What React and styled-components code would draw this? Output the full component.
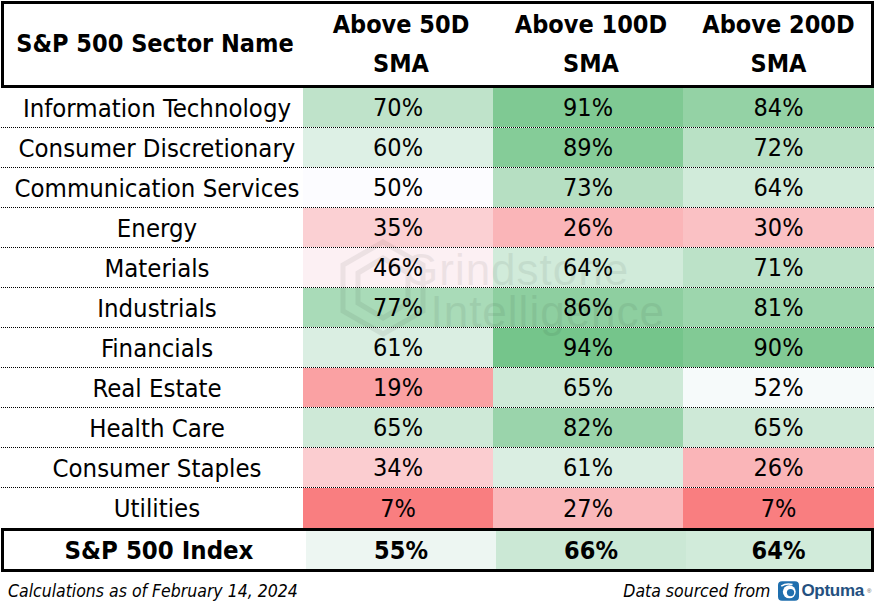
import React from "react";
import styled, { createGlobalStyle } from "styled-components";

const GlobalStyle = createGlobalStyle`
  html, body {
    margin: 0;
    padding: 0;
    background: #ffffff;
  }
  body {
    font-family: "DejaVu Sans Condensed", "DejaVu Sans", sans-serif;
    font-stretch: condensed;
    color: #000;
  }
`;

const sectors = [
  ["Information Technology", 70, 91, 84],
  ["Consumer Discretionary", 60, 89, 72],
  ["Communication Services", 50, 73, 64],
  ["Energy", 35, 26, 30],
  ["Materials", 46, 64, 71],
  ["Industrials", 77, 86, 81],
  ["Financials", 61, 94, 90],
  ["Real Estate", 19, 65, 52],
  ["Health Care", 65, 82, 65],
  ["Consumer Staples", 34, 61, 26],
  ["Utilities", 7, 27, 7],
];

const index = ["S&P 500 Index", 55, 66, 64];

// three colour scale: red at 0, white at 50, green at 100
const mix = (a, b, t) => a.map((v, i) => Math.round(v + (b[i] - v) * t));
const scale = (v) => {
  const red = [248, 105, 107];
  const white = [252, 252, 255];
  const green = [99, 190, 123];
  const c = v < 50 ? mix(red, white, v / 50) : mix(white, green, (v - 50) / 50);
  return `rgb(${c.join(",")})`;
};

const Page = styled.div`
  width: 875px;
  height: 603px;
  position: relative;
  overflow: hidden;
  padding: 1px 1px 0 1px;
  box-sizing: border-box;
`;

const Grid = styled.div`
  display: grid;
  grid-template-columns: 302px 190px 190px 1fr;
`;

const HeaderBox = styled(Grid)`
  height: 87px;
  border: 3px solid #000;
  box-sizing: border-box;
`;

const HeadCell = styled.div`
  display: flex;
  align-items: center;
  justify-content: center;
  text-align: center;
  font-weight: bold;
  font-size: 25px;
  line-height: 39px;
  padding-bottom: 2px;
  white-space: nowrap;
`;

const Row = styled(Grid)`
  height: 40px;
  box-sizing: border-box;
  border-bottom: ${(p) => (p.$last ? "none" : "1px dotted #000")};
`;

const IndexRow = styled(Grid)`
  height: 44px;
  border: 3px solid #000;
  box-sizing: border-box;
`;

const NameCell = styled.div`
  display: flex;
  align-items: center;
  justify-content: center;
  white-space: nowrap;
  font-size: 25.5px;
  font-weight: ${(p) => (p.$bold ? "bold" : "normal")};
  padding-left: ${(p) => (p.$bold ? "8px" : "10px")};
`;

const ValueCell = styled.div`
  display: flex;
  align-items: center;
  justify-content: center;
  font-size: 25px;
  font-weight: ${(p) => (p.$bold ? "bold" : "normal")};
  background: ${(p) => p.$bg};
`;

const Footer = styled.div`
  display: flex;
  justify-content: space-between;
  align-items: center;
  padding: 8px 3px 0 7px;
  font-style: italic;
  font-size: 17.5px;
`;

const Source = styled.div`
  display: flex;
  align-items: center;
  gap: 8px;
`;

const Logo = styled.div`
  display: flex;
  align-items: center;
  gap: 2px;
  font-family: "Liberation Sans", Arial, sans-serif;
  font-stretch: normal;
  font-style: normal;
  font-size: 17px;
  font-weight: bold;
  color: #24507f;
  letter-spacing: -0.3px;
`;

const Reg = styled.sup`
  font-size: 6px;
  font-weight: normal;
  margin-left: 1px;
  color: #555;
`;

const Watermark = styled.div`
  position: absolute;
  left: 338px;
  top: 238px;
  display: flex;
  align-items: center;
  gap: 4px;
  opacity: 0.06;
  pointer-events: none;
  color: #000;
`;

const MarkText = styled.div`
  font-family: "Liberation Sans", sans-serif;
  font-stretch: normal;
  font-size: 44px;
  line-height: 42px;
  letter-spacing: 1px;
  margin-left: -28px;
  padding-top: 6px;
`;

const OptumaIcon = () => (
  <svg width="21" height="22" viewBox="0 0 26 24">
    <rect x="0" y="0" width="26" height="24" rx="5" fill="#1f6fae" />
    <circle cx="14" cy="13" r="8" fill="#fff" />
    <circle cx="15.5" cy="14" r="4.5" fill="#1f6fae" />
    <path d="M4 6 Q10 2 18 4" stroke="#fff" strokeWidth="2" fill="none" />
  </svg>
);

const Hexagon = () => (
  <svg width="90" height="100" viewBox="0 0 90 100">
    <path d="M45 4 L85 27 L85 73 L45 96 L5 73 L5 27 Z" fill="none" stroke="#000" strokeWidth="5" />
    <path d="M45 20 L70 35 L70 65 L45 80 L20 65 L20 35 Z" fill="none" stroke="#000" strokeWidth="5" />
  </svg>
);

export default function App() {
  return (
    <Page>
      <GlobalStyle />
      <HeaderBox>
        <HeadCell>S&amp;P 500 Sector Name</HeadCell>
        <HeadCell>Above 50D<br />SMA</HeadCell>
        <HeadCell>Above 100D<br />SMA</HeadCell>
        <HeadCell>Above 200D<br />SMA</HeadCell>
      </HeaderBox>
      {sectors.map(([name, a, b, c], i) => (
        <Row key={name} $last={i === sectors.length - 1}>
          <NameCell>{name}</NameCell>
          <ValueCell $bg={scale(a)}>{a}%</ValueCell>
          <ValueCell $bg={scale(b)}>{b}%</ValueCell>
          <ValueCell $bg={scale(c)}>{c}%</ValueCell>
        </Row>
      ))}
      <IndexRow>
        <NameCell $bold>{index[0]}</NameCell>
        <ValueCell $bold $bg={scale(index[1])}>{index[1]}%</ValueCell>
        <ValueCell $bold $bg={scale(index[2])}>{index[2]}%</ValueCell>
        <ValueCell $bold $bg={scale(index[3])}>{index[3]}%</ValueCell>
      </IndexRow>
      <Footer>
        <span>Calculations as of February 14, 2024</span>
        <Source>
          <span>Data sourced from</span>
          <Logo>
            <OptumaIcon />
            <span>Optuma</span>
            <Reg>®</Reg>
          </Logo>
        </Source>
      </Footer>
      <Watermark>
        <Hexagon />
        <MarkText>Grindstone<br />&nbsp;&nbsp;Intelligence</MarkText>
      </Watermark>
    </Page>
  );
}
